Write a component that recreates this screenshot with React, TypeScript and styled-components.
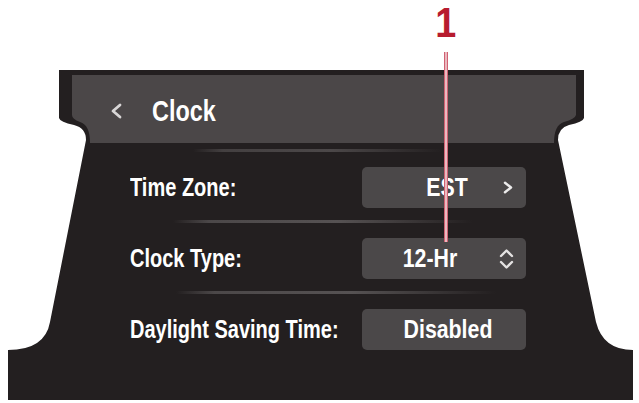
import React from "react";
import styled, { createGlobalStyle } from "styled-components";

const GlobalStyle = createGlobalStyle`
    html, body {
        margin: 0;
        padding: 0;
        background: #ffffff;
    }
    body {
        font-family: "Liberation Sans", Arial, Helvetica, sans-serif;
    }
`;

const Page = styled.div`
    position: relative;
    width: 639px;
    height: 403px;
    padding: 70px 6px 3px 8px;
    box-sizing: border-box;
    background: #ffffff;
    overflow: hidden;
`;

// dark display housing with the notched shoulders and the flared foot
const Screen = styled.div`
    width: 625px;
    height: 330px;
    padding-top: 5px;
    box-sizing: border-box;
    display: flex;
    flex-direction: column;
    background: #231f20;
    clip-path: path("M 51 0 L 576 0 L 576 48 Q 575 52 561 55 Q 550 58 550 70 L 588 252 Q 595 280 625 280 L 625 330 L 0 330 L 0 280 Q 37 280 42 252 L 78 70 Q 78 58 66 55 Q 52 52 51 48 Z");
`;

const Header = styled.div`
    margin-left: 64px;
    width: 504px;
    height: 68px;
    padding: 3px 0 0 38px;
    box-sizing: border-box;
    display: flex;
    align-items: center;
    gap: 29px;
    background: #4b4748;
    clip-path: path("M 0 0 L 504 0 L 504 40 Q 503 44 492 47 Q 482 50 482 68 L 18 68 Q 18 50 8 47 Q 0 44 0 40 Z");
`;

// the display face is a condensed grotesk, so the sans is narrowed
const Title = styled.span`
    display: inline-block;
    color: #ffffff;
    font-size: 30px;
    font-weight: 700;
    transform: scaleX(0.78);
    transform-origin: left center;
`;

const Separator = styled.div<{ $left: number; $width: number }>`
    height: 3px;
    margin: 12px 0 15px ${(p) => p.$left}px;
    width: ${(p) => p.$width}px;
    background: linear-gradient(
        to right,
        rgba(80, 76, 77, 0) 0%,
        rgba(80, 76, 77, 0.9) 12%,
        rgba(86, 82, 83, 1) 55%,
        rgba(80, 76, 77, 0) 100%
    );
`;

const TopSeparator = styled(Separator)`
    margin-top: 6px;
    opacity: 0.8;
`;

const Row = styled.div`
    display: grid;
    grid-template-columns: 232px 164px;
    align-items: center;
    height: 41px;
    padding-left: 122px;
`;

const Label = styled.span`
    display: inline-block;
    color: #ffffff;
    font-size: 25px;
    font-weight: 700;
    white-space: nowrap;
    transform: scaleX(0.8);
    transform-origin: left center;
`;

const ValueButton = styled.div<{ $pl: number; $pr: number }>`
    height: 41px;
    border-radius: 5px;
    background: #4b4849;
    display: grid;
    grid-template-columns: 1fr auto;
    align-items: center;
    padding: 0 ${(p) => p.$pr}px 0 ${(p) => p.$pl}px;
    box-sizing: border-box;
`;

const Value = styled.span`
    color: #ffffff;
    font-size: 26px;
    font-weight: 700;
    text-align: center;
    white-space: nowrap;
    transform: scaleX(0.82);
`;

const Icon = styled.svg`
    display: block;
    fill: none;
    stroke-linecap: round;
    stroke-linejoin: round;
`;

const Callout = styled.div`
    position: absolute;
    left: 426px;
    top: 3px;
    width: 40px;
    display: flex;
    flex-direction: column;
    align-items: center;
`;

const CalloutNumber = styled.span`
    display: inline-block;
    font-size: 42px;
    line-height: 40px;
    font-weight: 700;
    color: #b71c2f;
    transform: scaleX(0.9);
`;

const CalloutLine = styled.div`
    margin-top: 9px;
    width: 4px;
    height: 190px;
    background: linear-gradient(to right, #c2364c, #f8e4e6 50%, #c2364c);
`;

const BackIcon = () => (
    <Icon width="13" height="16" viewBox="0 0 13 16" stroke="#d8d6d6" strokeWidth="2.8">
        <polyline points="10,2 3,8 10,14" />
    </Icon>
);

const NextIcon = () => (
    <Icon width="10" height="13" viewBox="0 0 10 13" stroke="#ecebeb" strokeWidth="2.5">
        <polyline points="2,1.8 8,6.5 2,11.2" />
    </Icon>
);

const UpDownIcon = () => (
    <Icon width="17" height="22" viewBox="0 0 17 22" stroke="#e4e2e2" strokeWidth="2.4">
        <polyline points="3,8 8.5,2.5 14,8" />
        <polyline points="3,14 8.5,19.5 14,14" />
    </Icon>
);

const App: React.FC = () => {
    return (
        <Page>
            <GlobalStyle />
            <Screen>
                <Header>
                    <BackIcon />
                    <Title>Clock</Title>
                </Header>
                <TopSeparator $left={185} $width={250} />
                <Row>
                    <Label>Time Zone:</Label>
                    <ValueButton $pl={29} $pr={13}>
                        <Value>EST</Value>
                        <NextIcon />
                    </ValueButton>
                </Row>
                <Separator $left={165} $width={300} />
                <Row>
                    <Label>Clock Type:</Label>
                    <ValueButton $pl={0} $pr={11}>
                        <Value>12-Hr</Value>
                        <UpDownIcon />
                    </ValueButton>
                </Row>
                <Separator $left={168} $width={320} />
                <Row>
                    <Label>Daylight Saving Time:</Label>
                    <ValueButton $pl={8} $pr={0}>
                        <Value>Disabled</Value>
                    </ValueButton>
                </Row>
            </Screen>
            <Callout>
                <CalloutNumber>1</CalloutNumber>
                <CalloutLine />
            </Callout>
        </Page>
    );
};

export default App;
